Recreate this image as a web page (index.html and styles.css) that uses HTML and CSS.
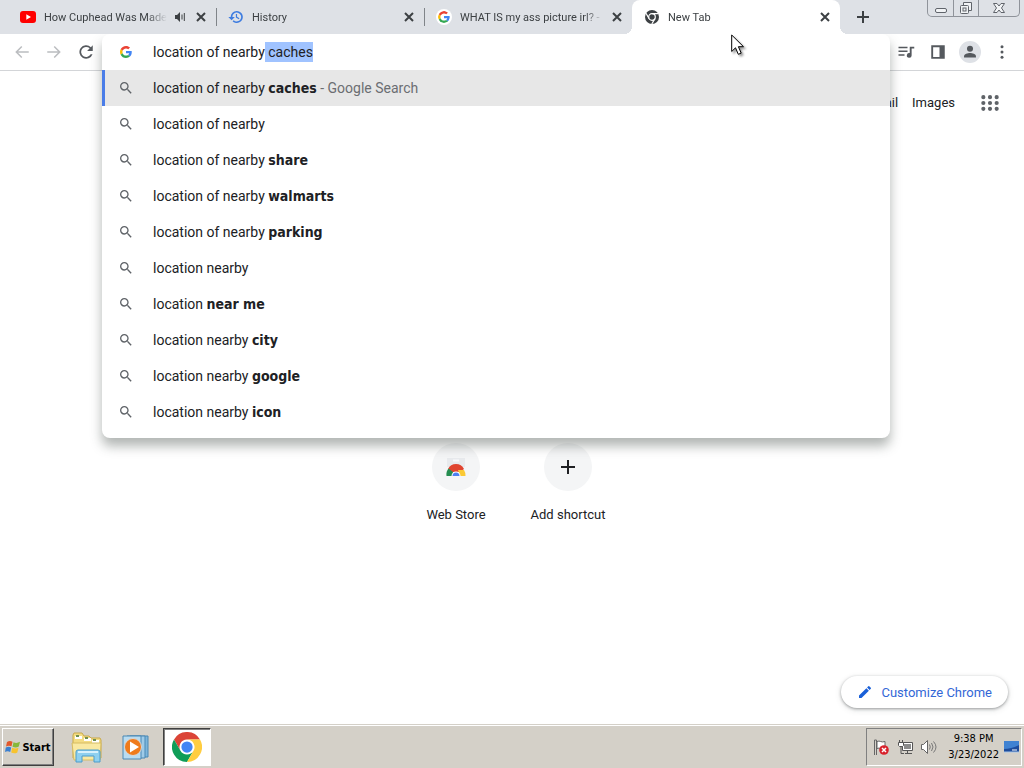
FILE: index.html
```html
<!DOCTYPE html>
<html lang="en">
  <head>
    <meta charset="UTF-8" />
    <title>New Tab</title>
    <link rel="stylesheet" href="styles.css">
  </head>
  <body>
    <!-- Shared icons -->
    <svg class="sprite" aria-hidden="true">
      <symbol id="search" viewBox="0 0 24 24">
        <path d="M15.5 14h-.79l-.28-.27A6.47 6.47 0 0 0 16 9.5 6.5 6.5 0 1 0 9.5 16c1.61 0 3.09-.59 4.23-1.57l.27.28v.79l5 4.99L20.49 19l-4.99-5zm-6 0C7.01 14 5 11.99 5 9.5S7.01 5 9.5 5 14 7.01 14 9.5 11.99 14 9.5 14z" />
      </symbol>
      <symbol id="close" viewBox="0 0 16 16">
        <path d="M4 4l8 8M12 4l-8 8" fill="none" stroke="currentColor" stroke-width="2" />
      </symbol>
      <symbol id="google" viewBox="0 0 48 48">
        <path fill="#ea4335" d="M24 9.5c3.54 0 6.71 1.22 9.21 3.6l6.85-6.85C35.9 2.38 30.47 0 24 0 14.62 0 6.51 5.38 2.56 13.22l7.98 6.19C12.43 13.72 17.74 9.5 24 9.5z" />
        <path fill="#4285f4" d="M46.98 24.55c0-1.57-.15-3.09-.38-4.55H24v9.02h12.94c-.58 2.96-2.26 5.48-4.78 7.18l7.73 6c4.51-4.18 7.09-10.36 7.09-17.65z" />
        <path fill="#fbbc05" d="M10.53 28.59c-.48-1.45-.76-2.99-.76-4.59s.27-3.14.76-4.59l-7.98-6.19C.92 16.46 0 20.12 0 24s.92 7.54 2.56 10.78l7.97-6.19z" />
        <path fill="#34a853" d="M24 48c6.48 0 11.93-2.13 15.89-5.81l-7.73-6c-2.15 1.45-4.92 2.3-8.16 2.3-6.26 0-11.57-4.22-13.47-9.91l-7.98 6.19C6.51 42.62 14.62 48 24 48z" />
      </symbol>
      <symbol id="chrome" viewBox="0 0 48 48">
        <path fill="#db4437" d="M3.2 12A24 24 0 0 1 44.8 12H24a12 12 0 0 0-10.4 18z" />
        <path fill="#0f9d58" d="M3.2 12A24 24 0 0 0 24 48L34.4 30A12 12 0 0 1 13.6 30z" />
        <path fill="#ffcd40" d="M44.8 12A24 24 0 0 1 24 48L34.4 30A12 12 0 0 0 24 12z" />
        <circle cx="24" cy="24" r="11" fill="#fff" />
        <circle cx="24" cy="24" r="9" fill="#4285f4" />
      </symbol>
    </svg>

    <!-- Tab strip -->
    <header class="tab-strip">
      <div class="tabs">
        <div class="tab">
          <svg class="favicon" viewBox="0 0 16 16"><rect x="0" y="2" width="16" height="12" rx="3" fill="#f00" /><path d="M6.3 5.2v5.6L11 8z" fill="#fff" /></svg>
          <span class="tab-title">How Cuphead Was Made</span>
          <button class="tab-audio" aria-label="Mute tab"><svg viewBox="0 0 16 16"><path d="M3 6h2l3-3v10L5 10H3z" /><path d="M10 5.5v5M12.300 4v8" fill="none" stroke="currentColor" stroke-width="1" /></svg></button>
          <button class="tab-close" aria-label="Close tab"><svg><use href="#close" /></svg></button>
        </div>
        <div class="tab">
          <svg class="favicon" viewBox="0 0 24 24" fill="#3f7de0"><path d="M13 3a9 9 0 0 0-9 9H0.500l4.900 4.900L10.300 12H6.500a6.600 6.600 0 1 1 2 4.700l-1.600 1.700A9 9 0 1 0 13 3zm-1.200 4.500v5.300l4.400 2.700 1-1.500-3.600-2.200V7.500z" /></svg>
          <span class="tab-title">History</span>
          <button class="tab-close" aria-label="Close tab"><svg><use href="#close" /></svg></button>
        </div>
        <div class="tab">
          <svg class="favicon favicon-google"><use href="#google" /></svg>
          <span class="tab-title">WHAT IS my ass picture irl? -</span>
          <button class="tab-close" aria-label="Close tab"><svg><use href="#close" /></svg></button>
        </div>
        <div class="tab active">
          <svg class="favicon" viewBox="0 0 16 16"><circle cx="8" cy="8" r="7" fill="#3c4043" /><circle cx="8" cy="8" r="3.300" fill="none" stroke="#fff" stroke-width="1.200" /><path d="M8 4.700h6.300M5.100 9.600L2 4.300M10.900 9.600L7.800 15" stroke="#fff" stroke-width="1.200" /></svg>
          <span class="tab-title">New Tab</span>
          <button class="tab-close" aria-label="Close tab"><svg><use href="#close" /></svg></button>
        </div>
      </div>
      <button class="new-tab" aria-label="New tab"><svg viewBox="0 0 16 16"><path d="M8 2v12M2 8h12" stroke="currentColor" stroke-width="2" /></svg></button>
      <div class="window-controls">
        <button aria-label="Minimize"><svg viewBox="0 0 16 16"><rect x="2.500" y="8.500" width="11" height="4" rx="1.500" /></svg></button>
        <button aria-label="Restore"><svg viewBox="0 0 16 16"><path d="M5.500 5V2.500h8v8H11" /><rect x="2.500" y="5.500" width="8" height="8" rx="1" /><rect x="5" y="8" width="3" height="3" /></svg></button>
        <button aria-label="Close"><svg viewBox="0 0 16 16"><path d="M2.500 3.500h3.500l2 2.500 2-2.500h3.500L10.500 8l3 4.500H10L8 10l-2 2.500H2.500L5.500 8z" /></svg></button>
      </div>
    </header>

    <!-- Toolbar -->
    <div class="toolbar">
      <button class="tool disabled" aria-label="Back"><svg viewBox="0 0 24 24"><path d="M21 11H6.830l5.590-5.590L11 4l-8 8 8 8 1.410-1.410L6.830 13H21z" /></svg></button>
      <button class="tool disabled" aria-label="Forward"><svg viewBox="0 0 24 24"><path d="M3 11h14.170l-5.590-5.590L13 4l8 8-8 8-1.410-1.410L17.170 13H3z" /></svg></button>
      <button class="tool" aria-label="Reload"><svg viewBox="0 0 24 24"><path d="M18.500 5.500A9 9 0 1 0 20.700 15h-2.500a6.700 6.700 0 1 1-1.300-7.900L13.500 10.500H21V3z" /></svg></button>

      <div class="omnibox">
        <div class="omnibox-popup">
          <div class="omnibox-row">
            <svg class="row-icon google-icon"><use href="#google" /></svg>
            <input type="text" id="address" class="address" aria-label="Address and search bar" value="location of nearby caches" spellcheck="false" autocomplete="off" />
          </div>
          <ul class="suggestions" role="listbox" aria-label="Suggestions">
            <li class="selected" role="option"><svg class="row-icon"><use href="#search" /></svg><span>location of nearby <b>caches</b> <span class="hint">- Google Search</span></span></li>
            <li role="option"><svg class="row-icon"><use href="#search" /></svg><span>location of nearby</span></li>
            <li role="option"><svg class="row-icon"><use href="#search" /></svg><span>location of nearby <b>share</b></span></li>
            <li role="option"><svg class="row-icon"><use href="#search" /></svg><span>location of nearby <b>walmarts</b></span></li>
            <li role="option"><svg class="row-icon"><use href="#search" /></svg><span>location of nearby <b>parking</b></span></li>
            <li role="option"><svg class="row-icon"><use href="#search" /></svg><span>location nearby</span></li>
            <li role="option"><svg class="row-icon"><use href="#search" /></svg><span>location <b>near me</b></span></li>
            <li role="option"><svg class="row-icon"><use href="#search" /></svg><span>location nearby <b>city</b></span></li>
            <li role="option"><svg class="row-icon"><use href="#search" /></svg><span>location nearby <b>google</b></span></li>
            <li role="option"><svg class="row-icon"><use href="#search" /></svg><span>location nearby <b>icon</b></span></li>
          </ul>
        </div>
      </div>

      <button class="tool" aria-label="Media controls"><svg viewBox="0 0 24 24"><path d="M2 5h12v2H2zM2 10h12v2H2zM2 15h8v2H2zM17 5h6v2.200h-3.500V16.500a3.200 3.200 0 1 1-2.500-3.100z" /></svg></button>
      <button class="tool" aria-label="Side panel"><svg viewBox="0 0 24 24"><path d="M3 3h18v18H3zM5.500 5.500v13h8.500v-13z" fill-rule="evenodd" /></svg></button>
      <button class="tool" aria-label="Profile"><svg class="avatar" viewBox="0 0 24 24"><circle cx="12" cy="12" r="12" fill="#dee1e6" /><circle cx="12" cy="8.500" r="3.300" /><path d="M5.500 18v-1.500c0-2.300 4-3.500 6.500-3.500s6.500 1.200 6.500 3.500V18z" /></svg></button>
      <button class="tool" aria-label="Menu"><svg viewBox="0 0 24 24"><circle cx="12" cy="5" r="2" /><circle cx="12" cy="12" r="2" /><circle cx="12" cy="19" r="2" /></svg></button>
    </div>

    <!-- New tab page -->
    <main class="page">
      <nav class="page-links">
        <a href="#">Gmail</a>
        <a href="#">Images</a>
        <button class="apps" aria-label="Google apps"><svg viewBox="0 0 24 24"><path d="M4 5h.010M12 5h.010M20 5h.010M4 12h.010M12 12h.010M20 12h.010M4 19h.010M12 19h.010M20 19h.010" stroke="#5f6368" stroke-width="5" stroke-linecap="round" /></svg></button>
      </nav>
      <div class="shortcuts">
        <a class="shortcut" href="#">
          <span class="shortcut-icon">
            <svg viewBox="0 0 24 24"><path d="M3 3h18v9H3z" fill="#e8eaed" /><path d="M9 4.500h6v2H9z" fill="#f8f9fa" /><path d="M4 14a9 9 0 0 1 16 0l-4 3H8z" fill="#e0442f" /><path d="M2.500 21a9.500 9.500 0 0 1 2-7.500L9 17v4z" fill="#258d50" /><path d="M21.500 21a9.500 9.500 0 0 0-1.500-6h-6l2 6z" fill="#fbc934" /><path d="M7.500 21a4.500 4.500 0 0 1 9 0z" fill="#fff" /><path d="M8.500 21a3.500 3.500 0 0 1 7 0z" fill="#4c7ff0" /></svg>
          </span>
          Web Store
        </a>
        <button class="shortcut">
          <span class="shortcut-icon"><svg viewBox="0 0 24 24"><path d="M12 5v14M5 12h14" stroke="#202124" stroke-width="2" /></svg></span>
          Add shortcut
        </button>
      </div>
      <button class="customize">
        <svg viewBox="0 0 24 24"><path d="M3 17.250V21h3.750L17.810 9.940l-3.750-3.750zM20.710 7.040a1 1 0 0 0 0-1.410l-2.340-2.340a1 1 0 0 0-1.410 0l-1.830 1.830 3.750 3.750z" /></svg>
        Customize Chrome
      </button>
    </main>

    <!-- Windows taskbar -->
    <footer class="taskbar">
      <button class="start">
        <svg viewBox="0 0 16 16"><path d="M2 3c2-1.300 3.700-1.200 5.500-.2L6.500 7.300C4.700 6.400 3 6.400 1 7.500z" fill="#e2582b" /><path d="M8.500 3.200c2 1 4 1 6.500-.4l-1.200 4.800c-2 1.200-4.200 1.100-6.300.1z" fill="#86b83b" /><path d="M.8 8.600c2-1.100 3.600-1.100 5.400-.2L5.200 13C3.400 12 1.700 12 0 13z" fill="#3a7fd0" /><path d="M7.200 8.800c2.200 1 4.200 1 6.300 0l-1.200 4.700c-2 1.200-4 1-6.100 0z" fill="#f7c32e" /></svg>
        Start
      </button>
      <button class="task" aria-label="Windows Explorer">
        <svg viewBox="0 0 32 32">
          <path d="M2 4l1-2h8l2 3h5l2 2h9l1 2v18H2z" fill="#f3dc83" stroke="#c9a94a" />
          <path d="M4 5h7v3H4zM13 7h7v3h-7zM21 9h7v3h-7z" fill="#fff" />
          <path d="M5 4h3v2H5zM14 6h3v2h-3zM22 8h3v2h-3z" fill="#6f8f4f" />
          <path d="M1 12h29l-1 17H3z" fill="#f9e9a2" stroke="#d6bc62" />
          <path d="M5 31V21q0-2 2-2h20q2 0 2 2v10h-6v-6H11v6z" fill="#8ed0ef" stroke="#4a9ccb" />
          <path d="M7 21h20" stroke="#d7f1fc" stroke-width="2" />
        </svg>
      </button>
      <button class="task" aria-label="Windows Media Player">
        <svg viewBox="0 0 32 32">
          <path d="M11 5h18v21H11z" fill="#7db6dc" stroke="#4b88b4" />
          <path d="M8 5h18v22H8z" fill="#9fcbe8" stroke="#4b88b4" />
          <path d="M4 5h18v23H4z" fill="#b9dcf1" stroke="#4b88b4" />
          <circle cx="14" cy="16" r="8.500" fill="#ef7b1c" stroke="#d8d8d8" />
          <path d="M11 10.500v11l9-5.500z" fill="#fff" />
        </svg>
      </button>
      <button class="task open" aria-label="Google Chrome"><svg><use href="#chrome" /></svg></button>
      <div class="tray">
        <svg class="tray-icon" viewBox="0 0 16 16"><path d="M1.500 1v15M3.500 1v15M1.500 1h2M4 2.500c3-1.500 4 1.500 8 0v7c-4 1.500-5-1.500-8 0z" fill="#fff" stroke="#666" /><circle cx="11" cy="11" r="4.800" fill="#d8222c" /><path d="M9 9l4 4M13 9l-4 4" stroke="#fff" stroke-width="1.500" /></svg>
        <svg class="tray-icon" viewBox="0 0 16 16"><path d="M5.500 3.500h10v8h-10zM8 14.500h7M10.500 12v2" fill="#fff" stroke="#555" /><path d="M7 5h7v5H7z" fill="#8b8b8b" /><path d="M4 8v6.500h3" fill="none" stroke="#555" /><path d="M1.500 3.500h5v3l-1 1h-3l-1-1zM2.500 3V1M5.500 3V1" fill="#fff" stroke="#555" /></svg>
        <svg class="tray-icon" viewBox="0 0 16 16"><path d="M.5 5.500h2l4-4v13l-4-4h-2z" fill="#fff" stroke="#666" /><path d="M8.500 5.500q1.500 2.500 0 5M10.500 4q3 4 0 8M12.500 2.500q5 5.500 0 11" fill="none" stroke="#777" /></svg>
        <div class="clock">9:38 PM<br />3/23/2022</div>
        <svg class="tray-icon" viewBox="0 0 16 16"><path d="M1 2h15v11H1z" fill="#1d4c9c" /><path d="M1 2h15v4Q9 10 1 10z" fill="#3f82d2" /><path d="M1 13h15" stroke="#a9c7ea" /><path d="M9 11h5" stroke="#fff" /></svg>
      </div>
    </footer>

    <!-- Mouse pointer -->
    <svg class="pointer" viewBox="0 0 14 22" aria-hidden="true"><path d="M.7 1v16.500l3.800-3.700 2.800 6.500 2.900-1.200-2.800-6.400h5.100z" fill="#fff" stroke="#000" /></svg>

    <script>
      // Keep the autocompleted part of the query selected
      const address = document.getElementById("address");
      address.focus();
      address.setSelectionRange(18, address.value.length);
    </script>
  </body>
</html>
```
FILE: styles.css
```css
* {
  box-sizing: border-box;
}
body {
  margin: 0;
  min-height: 100vh;
  display: flex;
  flex-direction: column;
  font-family: Roboto, "Liberation Sans", sans-serif;
  font-size: 13px;
  color: #202124;
  background: #fff;
}
button {
  border: 0;
  padding: 0;
  background: none;
  font: inherit;
  color: inherit;
  display: flex;
  align-items: center;
  justify-content: center;
}
a {
  color: inherit;
  text-decoration: none;
}
svg {
  display: block;
  flex: none;
}
.sprite {
  position: absolute;
  width: 0;
  height: 0;
}

/* Tab strip */
.tab-strip {
  display: flex;
  height: 34px;
  padding-left: 8px;
  background: #dee1e6;
  color: #3c4043;
}
.tabs {
  display: flex;
  flex: 0 1 832px;
  min-width: 0;
}
.tab {
  flex: 1 1 0;
  min-width: 0;
  display: flex;
  align-items: center;
  padding: 0 7px 0 12px;
  position: relative;
  font-size: 11px;
}
.tab:not(.active)::after {
  content: "";
  position: absolute;
  right: -1px;
  top: 8px;
  height: 18px;
  width: 1px;
  background: #808489;
}
.tab:nth-child(3)::after {
  display: none;
}
.tab.active {
  background: #fff;
  border-radius: 8px 8px 0 0;
}
.tab.active::before,
.tab.active::after {
  content: "";
  position: absolute;
  bottom: 0;
  width: 8px;
  height: 8px;
}
.tab.active::before {
  left: -8px;
  background: radial-gradient(circle at 0 0, transparent 8px, #fff 8px);
}
.tab.active::after {
  right: -8px;
  background: radial-gradient(circle at 100% 0, transparent 8px, #fff 8px);
}
.favicon {
  width: 16px;
  height: 16px;
  margin-right: 8px;
}
.favicon-google {
  padding: 2px;
  border-radius: 8px;
  background: #fff;
}
.tab-title {
  flex: 1;
  min-width: 0;
  overflow: hidden;
  white-space: nowrap;
  -webkit-mask-image: linear-gradient(to left, transparent, #000 20px);
  mask-image: linear-gradient(to left, transparent, #000 20px);
}
.tab-close,
.tab-audio {
  margin-left: 5px;
}
.tab-close svg,
.tab-audio svg,
.new-tab svg {
  width: 16px;
  height: 16px;
  fill: currentColor;
}
.new-tab {
  margin-left: 15px;
}
.window-controls {
  display: flex;
  align-self: flex-start;
  height: 17px;
  margin: 0 4px 0 auto;
  border: 1px solid #8f939a;
  border-top: 0;
  border-radius: 0 0 5px 5px;
}
.window-controls button {
  width: 25px;
}
.window-controls button + button {
  border-left: 1px solid #8f939a;
}
.window-controls button:last-child {
  width: 41px;
}
.window-controls svg {
  width: 16px;
  height: 16px;
  fill: #f1f3f5;
  stroke: #60646b;
}

/* Toolbar */
.toolbar {
  display: flex;
  height: 37px;
  padding: 0 6px;
  border-bottom: 1px solid #d3d5d8;
}
.tool {
  width: 32px;
}
.tool svg {
  width: 18px;
  height: 18px;
  fill: #55595e;
}
.tool.disabled svg {
  fill: #bbbdc0;
}
.tool .avatar {
  width: 22px;
  height: 22px;
}
.omnibox {
  flex: 1;
  position: relative;
}
.omnibox-popup {
  position: absolute;
  top: 0;
  left: 0;
  right: 0;
  z-index: 2;
  padding-bottom: 8px;
  border-radius: 8px;
  background: #fff;
  box-shadow: 0 8px 12px rgba(60, 70, 66, 0.4);
  clip-path: inset(0 -20px -30px -20px);
  font-size: 14px;
}
.omnibox-row,
.suggestions li {
  display: flex;
  align-items: center;
  height: 36px;
  padding-left: 16px;
}
.row-icon {
  width: 16px;
  height: 16px;
  margin-right: 19px;
  fill: #5f6368;
}
.google-icon {
  padding: 2px;
}
.address {
  flex: 1;
  height: 20px;
  padding: 0;
  border: 0;
  outline: 0;
  background: none;
  font: inherit;
  line-height: 20px;
  color: inherit;
}
.address::selection {
  background: #a0c3ff;
  color: #202124;
}
.suggestions {
  list-style: none;
  margin: 0;
  padding: 0;
}
.suggestions b {
  font-family: "DejaVu Sans Condensed", "DejaVu Sans", sans-serif;
}
.suggestions .selected {
  padding-left: 13px;
  border-left: 3px solid #4a7de8;
  background: #e7e7e7;
}
.hint {
  color: #6b6e72;
}

/* New tab page */
.page {
  flex: 1;
  display: flex;
  flex-direction: column;
}
.page-links {
  display: flex;
  align-items: center;
  justify-content: flex-end;
  gap: 14px;
  height: 63px;
  padding-right: 22px;
}
.apps {
  margin-left: 9px;
}
.apps svg {
  width: 24px;
  height: 20px;
}
.shortcuts {
  display: flex;
  justify-content: center;
  margin-top: 309px;
}
.shortcut {
  display: flex;
  flex-direction: column;
  align-items: center;
  gap: 16px;
  width: 112px;
  line-height: 15px;
}
.shortcut-icon {
  display: flex;
  align-items: center;
  justify-content: center;
  width: 48px;
  height: 48px;
  border-radius: 50%;
  background: #f4f5f6;
}
.shortcut-icon svg {
  width: 24px;
  height: 24px;
}
.customize {
  align-self: flex-end;
  gap: 8px;
  height: 32px;
  margin: auto 16px 16px 0;
  padding: 0 16px;
  border-radius: 16px;
  background: #fff;
  box-shadow: 0 1px 3px rgba(60, 64, 67, 0.45), 0 2px 6px rgba(60, 64, 67, 0.15);
  color: #3367d6;
}
.customize svg {
  width: 16px;
  height: 16px;
  fill: #1a60d8;
}

/* Taskbar */
.taskbar {
  display: flex;
  align-items: center;
  height: 44px;
  padding: 1px 2px 0;
  border-top: 1px solid #d4d0c8;
  background: #d4d0c8;
  box-shadow: inset 0 1px #fff;
  font-family: "DejaVu Sans Condensed", "DejaVu Sans", sans-serif;
  font-size: 11px;
  color: #000;
}
.start,
.task.open {
  height: 38px;
  border: 1px solid;
  border-color: #fff #404040 #404040 #fff;
  box-shadow: inset -1px -1px #808080;
}
.start {
  gap: 1px;
  width: 52px;
  margin-right: 9px;
  font-weight: bold;
}
.start svg {
  width: 16px;
  height: 16px;
}
.task {
  width: 48px;
}
.task svg {
  width: 32px;
  height: 32px;
}
.task.open {
  margin-left: 4px;
  border-color: #404040 #fff #fff #404040;
  box-shadow: inset 1px 1px #808080;
  background: #fff;
}
.task.open svg {
  width: 30px;
  height: 30px;
}
.tray {
  display: flex;
  align-items: center;
  gap: 8px;
  height: 38px;
  margin-left: auto;
  padding: 0 2px 0 6px;
  border: 1px solid;
  border-color: #808080 #fff #fff #808080;
}
.tray-icon {
  width: 16px;
  height: 16px;
}
.clock {
  margin: 0 -4px 0 3px;
  text-align: center;
  line-height: 16px;
}

.pointer {
  position: absolute;
  z-index: 3;
  left: 731px;
  top: 34px;
  width: 14px;
  height: 22px;
  filter: drop-shadow(2px 2px 1px rgba(0, 0, 0, 0.4));
}
```
